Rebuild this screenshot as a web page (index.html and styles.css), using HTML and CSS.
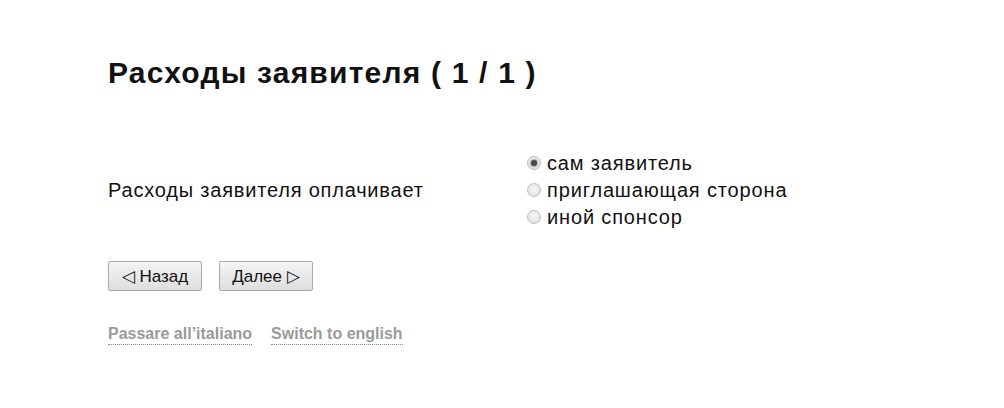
FILE: index.html
```html
<!DOCTYPE html>
<html lang="ru">
<head>
<meta charset="utf-8">
<title>Расходы заявителя</title>
<link rel="stylesheet" href="styles.css">
</head>
<body>
<div class="page">
  <h1 class="title">Расходы заявителя ( 1 / 1 )</h1>
  <div class="field">
    <div class="field-label">Расходы заявителя оплачивает</div>
    <div class="options">
      <label class="option"><span class="radio checked"></span>сам заявитель</label>
      <label class="option"><span class="radio"></span>приглашающая сторона</label>
      <label class="option"><span class="radio"></span>иной спонсор</label>
    </div>
  </div>
  <div class="buttons">
    <button class="btn">◁ Назад</button>
    <button class="btn">Далее ▷</button>
  </div>
  <div class="langs">
    <a class="lang">Passare all’italiano</a>
    <a class="lang">Switch to english</a>
  </div>
</div>
</body>
</html>
```
FILE: styles.css
```css
html, body {
  margin: 0;
  padding: 0;
  background: #fff;
}
body {
  font-family: "Liberation Sans", Arial, sans-serif;
  color: #111;
}
.page {
  padding: 53px 0 0 108px;
}
.title {
  margin: 0;
  font-size: 30px;
  font-weight: bold;
  letter-spacing: 1.2px;
  line-height: 40px;
  color: #111;
}
.field {
  display: flex;
  align-items: center;
  margin-top: 57px;
}
.field-label {
  width: 419px;
  font-size: 20px;
  letter-spacing: 0.8px;
  line-height: 27px;
}
.options {
  display: flex;
  flex-direction: column;
}
.option {
  display: flex;
  align-items: center;
  font-size: 20px;
  letter-spacing: 0.85px;
  line-height: 27px;
  color: #111;
}
.radio {
  width: 14px;
  height: 14px;
  border-radius: 50%;
  border: 1px solid #bcbcbc;
  background: radial-gradient(circle at 50% 40%, #f8f8f8 0%, #dadada 100%);
  margin-right: 6px;
  margin-top: -2px;
  position: relative;
  box-sizing: border-box;
  flex: none;
}
.radio.checked::after {
  content: "";
  position: absolute;
  left: 3px;
  top: 3px;
  width: 6px;
  height: 6px;
  border-radius: 50%;
  background: #4a4a4a;
  box-shadow: 0 0 1px 1px rgba(90,90,90,0.45);
}
.buttons {
  display: flex;
  gap: 17px;
  margin-top: 30px;
}
.btn {
  font-family: "Liberation Sans", Arial, sans-serif;
  font-size: 17px;
  color: #111;
  height: 30px;
  padding: 0 10px;
  border: 1px solid #a9a9a9;
  border-radius: 2px;
  background: linear-gradient(#f4f4f4, #dedede);
  min-width: 94px;
}
.langs {
  display: flex;
  gap: 19px;
  margin-top: 34px;
}
.lang {
  font-size: 16px;
  font-weight: bold;
  color: #9a9a9a;
  text-decoration: none;
  border-bottom: 1px dotted #8a8a8a;
  line-height: 18px;
  padding-bottom: 1px;
}
```
